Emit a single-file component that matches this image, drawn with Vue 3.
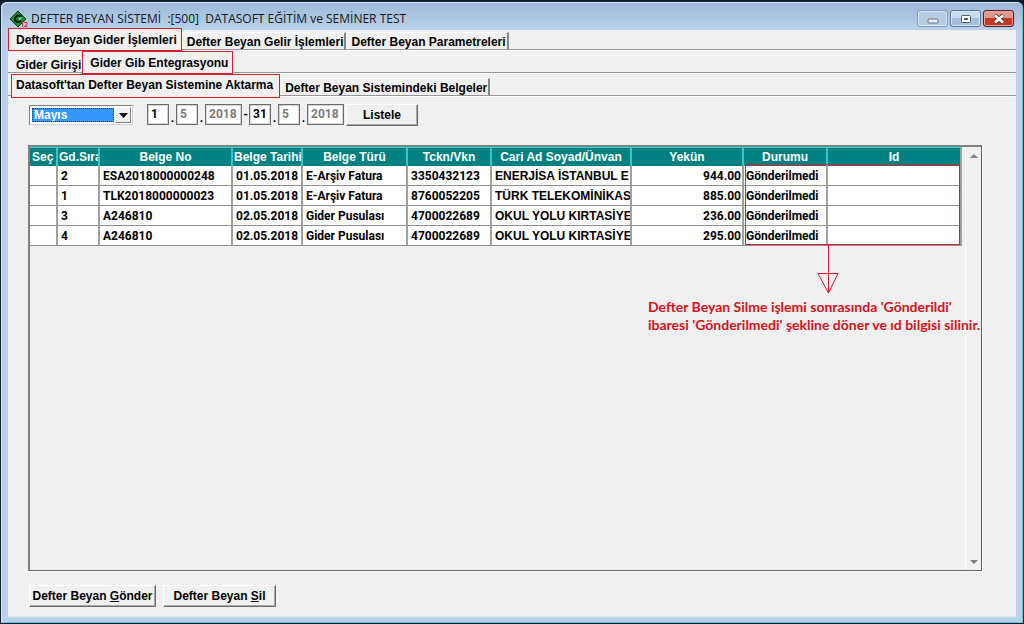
<script setup>
import { ref } from 'vue'

const mainTabs = ['Defter Beyan Gider İşlemleri', 'Defter Beyan Gelir İşlemleri', 'Defter Beyan Parametreleri']
const giderTabs = ['Gider Girişi', 'Gider Gib Entegrasyonu']
const transferTabs = ["Datasoft'tan Defter Beyan Sistemine Aktarma", 'Defter Beyan Sistemindeki Belgeler']
const mainTab = ref(0)
const giderTab = ref(1)
const transferTab = ref(0)

const month = ref('Mayıs')
const start = ref('1')
const end = ref('31')

const rows = [
  { sira: 2, no: 'ESA2018000000248', tarih: '01.05.2018', tur: 'E-Arşiv Fatura', vkn: '3350432123', cari: 'ENERJİSA İSTANBUL E', yekun: '944.00', durum: 'Gönderilmedi' },
  { sira: 1, no: 'TLK2018000000023', tarih: '01.05.2018', tur: 'E-Arşiv Fatura', vkn: '8760052205', cari: 'TÜRK TELEKOMİNİKAS', yekun: '885.00', durum: 'Gönderilmedi' },
  { sira: 3, no: 'A246810', tarih: '02.05.2018', tur: 'Gider Pusulası', vkn: '4700022689', cari: 'OKUL YOLU KIRTASİYE', yekun: '236.00', durum: 'Gönderilmedi' },
  { sira: 4, no: 'A246810', tarih: '02.05.2018', tur: 'Gider Pusulası', vkn: '4700022689', cari: 'OKUL YOLU KIRTASİYE', yekun: '295.00', durum: 'Gönderilmedi' }
]
</script>

<template>
  <div class="window">
    <header class="titlebar">
      <svg class="logo" width="18" height="18" viewBox="0 0 18 18" aria-hidden="true">
        <path d="M8 1 L16 9 L8 17 L0 9 Z" fill="#1f8a2c" stroke="#06400f" />
        <path d="M11.5 7 L9.5 5.5 H7.5 L5 8 V10 L7 12 H9.5 L11 10.5" fill="none" stroke="#061f0a" stroke-width="2" />
        <path d="M11.5 7.5 L9 9.5" stroke="#d9f0dc" stroke-width="1.2" />
        <path d="M12.5 12 V17 M14 12.5 H17 V14.5 L14.5 16.5 H17.5" fill="none" stroke="#e0262b" />
      </svg>
      <h1 class="title">DEFTER BEYAN SİSTEMİ&nbsp; :[500]&nbsp; DATASOFT EĞİTİM ve SEMİNER TEST</h1>
      <div class="winbtns">
        <button type="button" class="winbtn min" aria-label="Küçült">
          <svg width="12" height="6" viewBox="0 0 12 6"><rect x="1" y="1" width="10" height="4" rx="1" fill="#e9eef4" stroke="#6a7480" /></svg>
        </button>
        <button type="button" class="winbtn" aria-label="Ekranı kapla">
          <svg width="12" height="10" viewBox="0 0 12 10"><rect x="1.5" y="1.5" width="9" height="7" rx="1" fill="#fff" stroke="#505a66" /><rect x="4.5" y="4.5" width="3" height="1" fill="#9ab4d0" stroke="#505a66" /></svg>
        </button>
        <button type="button" class="winbtn close" aria-label="Kapat">
          <svg width="14" height="10" viewBox="0 0 14 10"><path d="M3 1 L11 9 M11 1 L3 9" stroke="#6a2a2a" stroke-width="4" /><path d="M3 1.5 L11 8.5 M11 1.5 L3 8.5" stroke="#fff" stroke-width="2.6" /></svg>
        </button>
      </div>
    </header>

    <main class="client">
      <nav class="tabs">
        <button v-for="(t, i) in mainTabs" :key="t" type="button" class="tab" :class="{ active: mainTab === i }" @click="mainTab = i">{{ t }}</button>
      </nav>
      <nav class="tabs second">
        <button v-for="(t, i) in giderTabs" :key="t" type="button" class="tab" :class="{ active: giderTab === i }" @click="giderTab = i">{{ t }}</button>
      </nav>
      <nav class="tabs third">
        <button v-for="(t, i) in transferTabs" :key="t" type="button" class="tab" :class="{ active: transferTab === i }" @click="transferTab = i">{{ t }}</button>
      </nav>

      <section class="panel">
        <form class="filter" @submit.prevent>
          <div class="combo">
            <select v-model="month" aria-label="Ay">
              <option>Mayıs</option>
            </select>
            <span class="arrow"><svg width="9" height="5" viewBox="0 0 9 5"><path d="M0 0 H9 L4.5 5 Z" /></svg></span>
          </div>
          <div class="dates">
            <input v-model="start" class="day" aria-label="Başlangıç günü" />
            <span class="sep">.</span>
            <input class="day" value="5" disabled aria-label="Başlangıç ayı" />
            <span class="sep">.</span>
            <input class="year" value="2018" disabled aria-label="Başlangıç yılı" />
            <span class="sep dash">-</span>
            <input v-model="end" class="day" aria-label="Bitiş günü" />
            <span class="sep">.</span>
            <input class="day" value="5" disabled aria-label="Bitiş ayı" />
            <span class="sep">.</span>
            <input class="year" value="2018" disabled aria-label="Bitiş yılı" />
          </div>
          <button type="submit" class="btn list">Listele</button>
        </form>

        <div class="grid">
          <div class="sheet">
            <table>
              <colgroup>
                <col class="c-sec" /><col class="c-sira" /><col class="c-no" /><col class="c-tarih" /><col class="c-tur" />
                <col class="c-vkn" /><col class="c-cari" /><col class="c-yekun" /><col class="c-durum" /><col />
              </colgroup>
              <thead>
                <tr>
                  <th class="left">Seç</th><th class="left">Gd.Sıra</th><th>Belge No</th><th class="left">Belge Tarihi</th><th>Belge Türü</th>
                  <th>Tckn/Vkn</th><th>Cari Ad Soyad/Ünvan</th><th>Yekün</th><th>Durumu</th><th>Id</th>
                </tr>
              </thead>
              <tbody>
                <tr v-for="r in rows" :key="r.sira">
                  <td></td><td>{{ r.sira }}</td><td>{{ r.no }}</td><td>{{ r.tarih }}</td><td>{{ r.tur }}</td>
                  <td>{{ r.vkn }}</td><td class="name">{{ r.cari }}</td><td class="num">{{ r.yekun }}</td><td>{{ r.durum }}</td><td></td>
                </tr>
              </tbody>
            </table>
            <div class="highlight"></div>
            <div class="note">
              <svg width="22" height="50" viewBox="0 0 22 50" fill="none" stroke="#d0142c"><path d="M11.5 0 V49 M1 29.5 H21 L11.5 49 Z" /></svg>
              <p>Defter Beyan Silme işlemi sonrasında 'Gönderildi'<br />ibaresi 'Gönderilmedi' şekline döner ve ıd bilgisi silinir.</p>
            </div>
          </div>
          <div class="scroll">
            <svg width="8" height="4" viewBox="0 0 8 4"><path d="M0 4 H8 L4 0 Z" fill="#808080" /></svg>
            <svg width="8" height="4" viewBox="0 0 8 4"><path d="M0 0 H8 L4 4 Z" fill="#808080" /></svg>
          </div>
        </div>

        <footer class="actions">
          <button type="button" class="btn send">Defter Beyan <u>G</u>önder</button>
          <button type="button" class="btn del">Defter Beyan <u>S</u>il</button>
        </footer>
      </section>
    </main>
  </div>
</template>

<style>
body {
  margin: 0;
  background: #0b1a24;
}
</style>

<style scoped>
.window {
  box-sizing: border-box;
  min-height: 100vh;
  display: flex;
  flex-direction: column;
  padding: 0 7px 6px;
  border: 1px solid #10202c;
  border-top-width: 2px;
  border-radius: 7px 7px 0 0;
  background: linear-gradient(#9db9d8 0, #b9d1ea 28px, #b9d1ea 100%);
  box-shadow: inset 1px 1px 0 #d8e8f6, inset -1px -1px 0 #5cc4dc;
  font: bold 12px/14px "Liberation Sans", Arial, sans-serif;
  color: #000;
}
button, input, select {
  box-sizing: border-box;
  margin: 0;
  font: inherit;
  color: inherit;
}
.titlebar {
  display: flex;
  align-items: center;
  height: 28px;
  flex: none;
  padding-left: 2px;
}
.logo {
  margin-top: 5px;
}
.title {
  flex: 1;
  margin: 5px 0 0 3px;
  font: 12px/16px "Open Sans", "Noto Sans", sans-serif;
  color: #101820;
  white-space: nowrap;
}
.winbtns {
  display: flex;
  gap: 2px;
  margin: 5px 2px 0 0;
}
.winbtn {
  display: flex;
  align-items: center;
  justify-content: center;
  width: 31px;
  height: 17px;
  padding: 0;
  border: 1px solid #56769c;
  border-radius: 3px;
  background: linear-gradient(#c8dcf0 0 50%, #a3bfdc 50% 100%);
  box-shadow: inset 0 0 0 1px #dceaf7;
}
.winbtn.min {
  border-color: #8099b8;
  background: #b4cbe4;
}
.winbtn.min svg {
  margin-top: 4px;
}
.winbtn.close {
  border-color: #4a1d24;
  background: linear-gradient(#e0988c 0 50%, #c13a26 50% 100%);
  box-shadow: inset 0 0 0 1px #e8a89c;
}
.client {
  flex: 1;
  display: flex;
  flex-direction: column;
  background: #f0f0f0;
}
.tabs {
  box-sizing: border-box;
  height: 20px;
  flex: none;
  display: flex;
  align-items: flex-end;
  border-bottom: 1px solid #969696;
  box-shadow: 0 1px 0 #fff;
}
.tabs.second {
  height: 23px;
  padding-left: 3px;
}
.tabs.third {
  height: 23px;
  padding-left: 3px;
}
.tab {
  height: 17px;
  padding: 1px 1px 0 5px;
  border: 0;
  border-top: 1px solid #fff;
  border-right: 2px solid #868686;
  background: #f0f0f0;
  white-space: nowrap;
}
.tab.active {
  position: relative;
  height: 23px;
  margin-bottom: -2px;
  padding: 0 4px 0 7px;
  border: 1px solid #d8202c;
}
.second .tab.active {
  margin-left: -2px;
}
.third .tab.active {
  height: 24px;
  margin-bottom: -3px;
  padding: 0 6px 2px 4px;
}
.panel {
  flex: 1;
  display: flex;
  flex-direction: column;
  padding: 8px 34px 10px 20px;
}
.filter {
  display: flex;
  align-items: center;
  height: 22px;
}
.combo {
  position: relative;
  box-sizing: border-box;
  width: 104px;
  height: 20px;
  padding: 2px;
  border: 1px solid #808080;
  border-right-color: #d0d0d0;
  border-bottom-color: #d0d0d0;
  background: #fff;
  margin: 0 14px 0 1px;
}
.combo select {
  display: block;
  width: 82px;
  height: 14px;
  padding: 0 0 0 1px;
  border: 1px dotted #20406a;
  border-radius: 0;
  appearance: none;
  outline: 0;
  background: #3399ff;
  color: #fff;
  line-height: 12px;
}
.arrow {
  position: absolute;
  top: 1px;
  right: 1px;
  bottom: 1px;
  width: 16px;
  box-sizing: border-box;
  display: flex;
  align-items: center;
  justify-content: center;
  border: 1px solid;
  border-color: #fff #808080 #808080 #fff;
  background: #f0f0f0;
  pointer-events: none;
}
.dates {
  display: flex;
  align-items: flex-end;
  height: 22px;
  font-family: Roboto, "Liberation Sans", sans-serif;
}
.dates input {
  width: 22px;
  height: 21px;
  margin-bottom: 1px;
  padding: 0 0 1px 3px;
  border: 1px solid #6c6c6c;
  box-shadow: inset 0 0 0 1px #d4d4d4;
  border-radius: 0;
  background: #fff;
}
.dates input:disabled {
  color: #7c7c7c;
}
.dates .year {
  width: 37px;
}
.sep {
  width: 7px;
  line-height: 16px;
  text-align: center;
}
.sep.dash {
  line-height: 22px;
}
.btn {
  height: 22px;
  padding: 0;
  border: 1px solid;
  border-color: #fff #6a6a6a #6a6a6a #fff;
  box-shadow: inset -1px -1px 0 #a8a8a8;
  background: #f0f0f0;
  white-space: nowrap;
}
.list {
  width: 72px;
  margin-left: 2px;
}
.grid {
  flex: 1;
  display: flex;
  margin-top: 19px;
  border: 2px solid;
  border-color: #808080 #606060 #606060 #808080;
  border-right-width: 1px;
  border-bottom-width: 1px;
  box-shadow: 1px 1px 0 #fff;
}
.sheet {
  position: relative;
  flex: 1;
  margin-right: 3px;
}
table {
  width: 100%;
  table-layout: fixed;
  border-collapse: separate;
  border-spacing: 0;
}
.c-sec { width: 28px; }
.c-sira { width: 42px; }
.c-no { width: 133px; }
.c-tarih { width: 70px; }
.c-tur { width: 105px; }
.c-vkn { width: 84px; }
.c-cari { width: 140px; }
.c-yekun { width: 112px; }
.c-durum { width: 84px; }
th, td {
  box-sizing: border-box;
  overflow: hidden;
  white-space: nowrap;
}
th {
  height: 19px;
  padding: 0;
  border-top: 1px solid #20e0e0;
  border-right: 2px solid #30c8c8;
  background: #008080;
  color: #fff;
}
th.left {
  padding-left: 1px;
  text-align: left;
}
th:first-child {
  padding-left: 2px;
}
td {
  height: 20px;
  padding: 0 0 0 3px;
  border-right: 2px solid #a0a0a0;
  border-bottom: 1px solid #909090;
  background: #fff;
  font-family: Roboto, "Liberation Sans", sans-serif;
}
td.name {
  font-family: "Liberation Sans", Arial, sans-serif;
}
td.num {
  padding-right: 1px;
  text-align: right;
}
td:nth-child(9) {
  padding-left: 2px;
}
th:last-child {
  border-right-color: #a0a0a0;
}
.highlight {
  position: absolute;
  box-sizing: border-box;
  top: 17px;
  right: 2px;
  width: 215px;
  height: 81px;
  border: 1px solid #d8202c;
}
.note {
  position: absolute;
  top: 97px;
  right: -29px;
  width: 343px;
}
.note svg {
  display: block;
  margin-left: 169px;
}
.note p {
  margin: 4px 0 0;
  font: bold 14px/18px Lato, "Open Sans", sans-serif;
  color: #d8101c;
  white-space: nowrap;
}
.scroll {
  width: 15px;
  display: flex;
  flex-direction: column;
  align-items: center;
  justify-content: space-between;
  padding: 7px 0 6px;
  border-left: 1px solid #fff;
}
.actions {
  display: flex;
  gap: 7px;
  margin: 14px 0 0 1px;
}
.send {
  width: 127px;
}
.del {
  width: 113px;
}
</style>
